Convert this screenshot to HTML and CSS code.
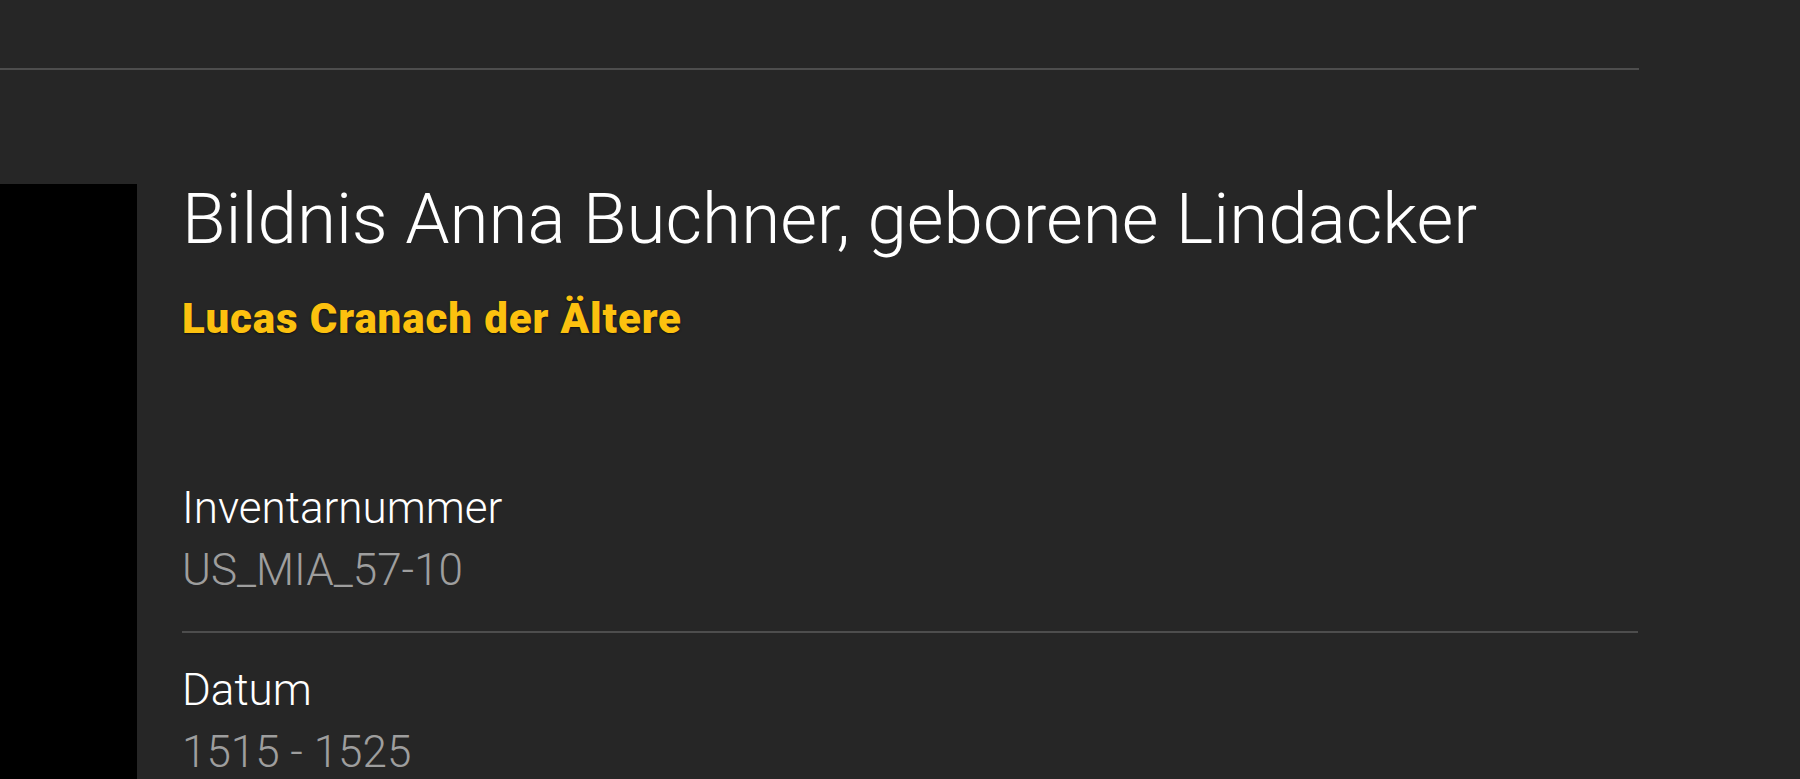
FILE: index.html
```html
<!DOCTYPE html>
<html lang="de">
<head>
<meta charset="utf-8">
<title>Bildnis Anna Buchner, geborene Lindacker</title>
<link rel="stylesheet" href="styles.css">
</head>
<body>
<div class="page">
  <header class="header"></header>
  <main class="main">
    <div class="image"></div>
    <section class="details">
      <h1 class="title">Bildnis Anna Buchner, geborene Lindacker</h1>
      <p class="author">Lucas Cranach der Ältere</p>
      <dl class="fields">
        <div class="field">
          <dt class="label">Inventarnummer</dt>
          <dd class="value">US_MIA_57-10</dd>
        </div>
        <div class="field">
          <dt class="label">Datum</dt>
          <dd class="value">1515 - 1525</dd>
        </div>
      </dl>
    </section>
  </main>
</div>
</body>
</html>
```

FILE: styles.css
```css
html, body {
  margin: 0;
  padding: 0;
  background: #262626;
  height: 100%;
  overflow: hidden;
}

body {
  font-family: Roboto, "Liberation Sans", sans-serif;
  color: #ffffff;
}

.page {
  width: 1639px;
}

.header {
  height: 68px;
  border-bottom: 2px solid #4d4d4d;
}

.main {
  display: flex;
  margin-top: 114px;
}

.image {
  flex: 0 0 137px;
  height: 700px;
  background: #000000;
}

.details {
  flex: 0 0 1456px;
  margin-left: 45px;
}

.title {
  margin: -1px 0 0 0;
  font-size: 71px;
  line-height: 71px;
  font-weight: 300;
  color: #ffffff;
}

.author {
  margin: 41px 0 0 0;
  font-size: 42px;
  line-height: 48px;
  font-weight: 900;
  letter-spacing: 0.9px;
  color: #fcc10f;
  text-shadow: 0 1px 2px rgba(0, 0, 0, 0.6);
}

.fields {
  margin: 135px 0 0 0;
  padding: 0;
}

.field {
  padding: 0 0 30px 0;
  border-bottom: 2px solid #4d4d4d;
}

.field + .field {
  padding-top: 27px;
  border-bottom: none;
}

.label {
  margin: 0;
  font-size: 44px;
  line-height: 61.6px;
  font-weight: 300;
  color: #ffffff;
}

.value {
  margin: 0;
  font-size: 44px;
  line-height: 61.6px;
  font-weight: 300;
  color: #9e9e9e;
}
```
